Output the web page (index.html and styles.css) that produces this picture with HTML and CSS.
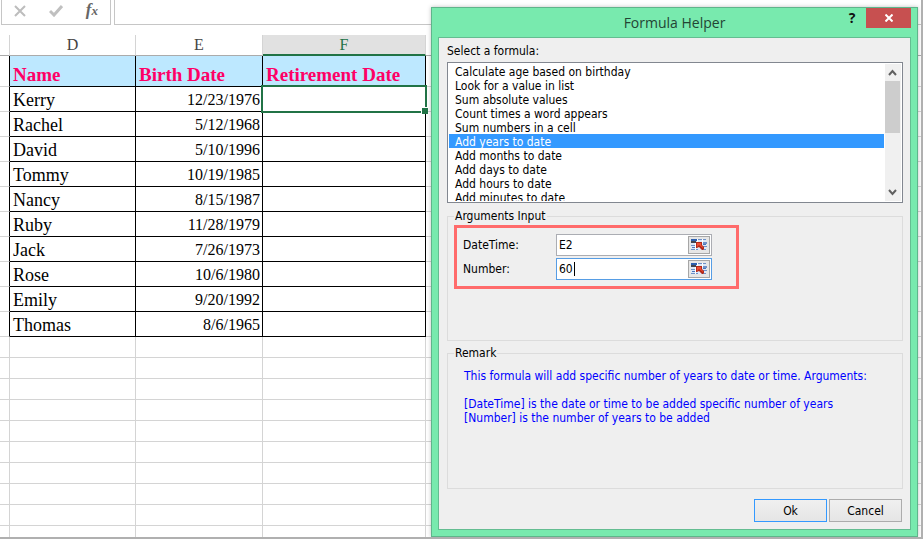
FILE: index.html
```html
<!DOCTYPE html>
<html lang="en">
<head>
<meta charset="utf-8">
<title>Formula Helper</title>
<link rel="stylesheet" href="styles.css">
</head>
<body>
<svg class="defs" aria-hidden="true">
  <symbol id="range-icon" viewBox="0 0 16 12">
    <path fill="#dce8f8" d="M0 1h15v10H0z"/>
    <path fill="#2c5fb0" d="M0 0h6v2H0z"/>
    <path fill="#3f4652" d="M0 2h5v2H0z"/>
    <path fill="#6f92c8" d="M7 0h4v1H7zM12 0h3v1h-3zM8 3h3v1H8zM12 3h4v2h-4zM0 6h4v1H0zM9 6h2v1H9zM12 7h4v1h-4zM0 10h4v1H0zM5 10h2v1H5zM12 10h3v1h-3z"/>
    <path fill="#4a76bd" d="M1 8h3v1H1zM12 5h3v1h-3z"/>
    <path fill="#fff" d="M4 4h1v7H4zM11 0h1v4h-1zM6 0h1v3H6z"/>
    <path fill="#b32a1a" d="M5 3h6v3l2 2v2l-1 1h-1L8 8 6 9H5z"/>
    <path fill="#ee4d33" d="M6 4h4v2l2 2v1L8 6 6 8z"/>
  </symbol>
</svg>
<main class="app">
  <div class="formula-bar">
    <div class="tools">
      <button aria-label="Cancel entry"><svg width="12" height="12" viewBox="0 0 12 12"><path d="M1 1l10 10M11 1L1 11" fill="none" stroke="#bdbdbd" stroke-width="2"/></svg></button>
      <button aria-label="Enter"><svg width="14" height="12" viewBox="0 0 14 12"><path d="M1 6l4 4 8-9" fill="none" stroke="#c0c0c0" stroke-width="3"/></svg></button>
      <button class="fx" aria-label="Insert function">f<sub>x</sub></button>
    </div>
    <input class="formula" aria-label="Formula">
  </div>
  <table class="sheet">
    <colgroup><col class="c"><col class="d"><col class="e"><col class="f"><col></colgroup>
    <thead><tr><th></th><th>D</th><th>E</th><th class="active">F</th><th></th></tr></thead>
    <tbody class="data">
      <tr class="titles"><td></td><th>Name</th><th>Birth Date</th><th>Retirement Date</th><td></td></tr>
      <tr><td></td><td>Kerry</td><td>12/23/1976</td><td class="selected"></td><td></td></tr>
      <tr><td></td><td>Rachel</td><td>5/12/1968</td><td></td><td></td></tr>
      <tr><td></td><td>David</td><td>5/10/1996</td><td></td><td></td></tr>
      <tr><td></td><td>Tommy</td><td>10/19/1985</td><td></td><td></td></tr>
      <tr><td></td><td>Nancy</td><td>8/15/1987</td><td></td><td></td></tr>
      <tr><td></td><td>Ruby</td><td>11/28/1979</td><td></td><td></td></tr>
      <tr><td></td><td>Jack</td><td>7/26/1973</td><td></td><td></td></tr>
      <tr><td></td><td>Rose</td><td>10/6/1980</td><td></td><td></td></tr>
      <tr><td></td><td>Emily</td><td>9/20/1992</td><td></td><td></td></tr>
      <tr><td></td><td>Thomas</td><td>8/6/1965</td><td></td><td></td></tr>
    </tbody>
    <tbody class="blank">
      <tr><td></td><td></td><td></td><td></td><td></td></tr>
      <tr><td></td><td></td><td></td><td></td><td></td></tr>
      <tr><td></td><td></td><td></td><td></td><td></td></tr>
      <tr><td></td><td></td><td></td><td></td><td></td></tr>
      <tr><td></td><td></td><td></td><td></td><td></td></tr>
      <tr><td></td><td></td><td></td><td></td><td></td></tr>
      <tr><td></td><td></td><td></td><td></td><td></td></tr>
      <tr><td></td><td></td><td></td><td></td><td></td></tr>
      <tr><td></td><td></td><td></td><td></td><td></td></tr>
      <tr><td></td><td></td><td></td><td></td><td></td></tr>
    </tbody>
  </table>
  <section class="dialog" role="dialog" aria-labelledby="dialog-title">
    <header class="titlebar">
      <h1 id="dialog-title">Formula Helper</h1>
      <div class="window-buttons">
        <button class="help" aria-label="Help">?</button>
        <button class="close" aria-label="Close"><svg width="8" height="8" viewBox="0 0 8 8"><path d="M0.5 0.5l7 7M7.5 0.5l-7 7" fill="none" stroke="#fff" stroke-width="2"/></svg></button>
      </div>
    </header>
    <form class="content">
      <label class="caption" for="formulas">Select a formula:</label>
      <div class="list">
        <select id="formulas" size="10">
          <option>Calculate age based on birthday</option>
          <option>Look for a value in list</option>
          <option>Sum absolute values</option>
          <option>Count times a word appears</option>
          <option>Sum numbers in a cell</option>
          <option selected>Add years to date</option>
          <option>Add months to date</option>
          <option>Add days to date</option>
          <option>Add hours to date</option>
          <option>Add minutes to date</option>
        </select>
        <div class="scrollbar">
          <svg width="15" height="17" viewBox="0 0 15 17"><path d="M4 11l3.500-4 3.500 4" fill="none" stroke="#606060" stroke-width="2"/></svg>
          <div class="thumb"></div>
          <svg width="15" height="17" viewBox="0 0 15 17"><path d="M4 6l3.500 4 3.500-4" fill="none" stroke="#606060" stroke-width="2"/></svg>
        </div>
      </div>
      <fieldset class="arguments">
        <legend>Arguments Input</legend>
        <div class="highlight">
          <label for="datetime">DateTime:</label>
          <div class="field"><input id="datetime" value="E2"><button type="button" aria-label="Select date cell"><svg width="16" height="12"><use href="#range-icon"/></svg></button></div>
          <label for="number">Number:</label>
          <div class="field current"><input id="number" value="60"><span class="caret"></span><button type="button" aria-label="Select number cell"><svg width="16" height="12"><use href="#range-icon"/></svg></button></div>
        </div>
      </fieldset>
      <fieldset class="remark">
        <legend>Remark</legend>
        <p>This formula will add specific number of years to date or time. Arguments:</p>
        <p>[DateTime] is the date or time to be added specific number of years<br>[Number] is the number of years to be added</p>
      </fieldset>
      <div class="actions">
        <button type="button" class="primary">Ok</button>
        <button type="button">Cancel</button>
      </div>
    </form>
  </section>
</main>
</body>
</html>
```
FILE: styles.css
```css
* { box-sizing: border-box; }
body {
  margin: 0;
  background: #fff;
  color: #000;
  font: 12px/14px "DejaVu Sans Condensed", "Noto Sans", sans-serif;
}
button, input, select { font: inherit; color: inherit; margin: 0; }
.defs { position: absolute; width: 0; height: 0; }
.app {
  position: relative;
  height: 100vh;
  overflow: hidden;
  border: solid #b0b0b0;
  border-width: 0 2px 2px 0;
}

.formula-bar { display: flex; gap: 3px; height: 25px; margin-bottom: 10px; padding-left: 1px; }
.tools {
  display: flex;
  justify-content: space-between;
  align-items: center;
  width: 110px;
  padding: 0 12px 2px;
  border: solid #c6c6c6;
  border-width: 0 1px 1px;
}
.tools button { display: flex; padding: 0; border: 0; background: none; }
.tools .fx { font: italic bold 17px/22px "Liberation Serif", serif; color: #666; }
.fx sub { font-size: 13px; line-height: 24px; vertical-align: baseline; }
.formula { flex: 1; min-width: 0; border: solid #c6c6c6; border-width: 0 0 1px 1px; background: #fff; outline: 0; }

.sheet {
  width: 100%;
  table-layout: fixed;
  border-collapse: separate;
  border-spacing: 0;
  font-family: "Liberation Serif", serif;
}
.c { width: 10px; }
.d { width: 126px; }
.e { width: 127px; }
.f { width: 163px; }
.sheet td, .sheet th { padding: 0; border: solid #d4d4d4; border-width: 0 1px 1px 0; white-space: nowrap; }
.sheet thead th {
  height: 21px;
  border-color: #d4d4d4 #d4d4d4 #ababab;
  font-size: 16px;
  line-height: 20px;
  font-weight: normal;
  color: #444;
}
.sheet thead .active { background: #e1e1e1; color: #217346; border-bottom: 2px solid #217346; line-height: 19px; }
.sheet tr > :last-child { border-right: 0; }
.data td, .data th { height: 25px; line-height: 22px; text-align: left; }
.data .titles > * { height: 31px; }
.data .titles th {
  padding: 7px 3px 0;
  background: #bde8ff;
  color: #ff0066;
  font-size: 19px;
  line-height: 23px;
}
.sheet .data tr > :nth-child(n+2):nth-child(-n+4) { border-color: #000; }
.sheet .data tr > :first-child { border-right-color: #000; }
.sheet .data td:nth-child(2) { padding: 2px 0 0 3px; font-size: 18px; }
.sheet .data td:nth-child(3) { padding: 2px 2px 0 0; font-size: 16px; text-align: right; }
.data .selected { position: relative; }
.selected::before { content: ""; position: absolute; inset: -2px; border: 2px solid #217346; }
.selected::after {
  content: "";
  position: absolute;
  right: -3px;
  bottom: -3px;
  width: 6px;
  height: 6px;
  border: solid #fff;
  border-width: 1px 0 0 1px;
  background: #217346;
}
.blank td { height: 21px; }

.dialog {
  position: absolute;
  top: 7px;
  left: 431px;
  right: 3px;
  padding: 0 6px 6px;
  border: 1px solid #5fb58b;
  background: #78eaae;
  box-shadow: 0 0 4px rgba(0, 0, 0, .25);
}
.titlebar { position: relative; height: 29px; }
.titlebar h1 {
  margin: 0;
  font: 14px/29px "Open Sans", sans-serif;
  text-align: center;
  color: #234534;
}
.window-buttons { position: absolute; top: 0; right: 0; display: flex; gap: 6px; }
.window-buttons button { display: flex; align-items: center; justify-content: center; height: 20px; padding: 0; border: 0; }
.window-buttons .help { width: 16px; background: none; font: bold 14px/20px "Open Sans", sans-serif; color: #111; }
.window-buttons .close { width: 45px; background: #c75050; }
.content { padding: 6px 7px 7px 8px; border: 1px solid #64bd91; background: #efefef; }
.caption { display: block; margin-bottom: 4px; }
.list { display: flex; height: 141px; padding: 1px; border: 1px solid #828790; background: #fff; }
.list select {
  flex: 1;
  min-width: 0;
  height: 137px;
  margin-right: 1px;
  padding: 0;
  border: 0;
  outline: 0;
  background: #fff;
  overflow: hidden;
  scrollbar-width: none;
}
.list option { min-height: 14px; height: 14px; padding: 1px 6px 0; line-height: 14px; }
.list option:checked { background: #3399ff linear-gradient(#3399ff, #3399ff); color: #fff; }
.scrollbar { display: flex; flex-direction: column; width: 16px; background: #f0f0f0; }
.scrollbar svg { flex: none; }
.scrollbar .thumb { height: 52px; width: 15px; margin-bottom: auto; background: #cdcdcd; }

fieldset { min-width: 0; margin: 6px 0 0; padding: 0 6px; border: 1px solid #dcdcdc; }
legend { padding: 0 1px; }
.arguments { height: 132px; }
.highlight {
  display: grid;
  grid-template-columns: 93px 156px;
  gap: 2px 0;
  align-items: center;
  width: 285px;
  margin-top: 2px;
  padding: 6px;
  border: 3px solid #ff6b6b;
}
.field { display: flex; align-items: center; height: 22px; padding: 1px; border: 1px solid #abadb3; background: #fff; }
.field.current { border-color: #569de5; }
.field input { flex: 0 1 130px; min-width: 0; padding: 0 1px; border: 0; outline: 0; background: none; }
.field.current input { flex-basis: 16px; }
.caret { width: 1px; height: 14px; background: #000; }
.field button {
  display: flex;
  align-items: center;
  justify-content: center;
  width: 22px;
  height: 18px;
  margin-left: auto;
  padding: 0;
  border: 1px solid #a6a6a6;
  background: #e6e6e6;
}
.remark { height: 143px; margin-top: 5px; color: #0000ff; }
.remark legend { color: #000; }
.remark p { margin: 9px 10px 14px; }
.remark p + p { margin: 0 10px; }
.actions { display: flex; justify-content: flex-end; gap: 2px; margin: 10px 1px 0 0; }
.actions button {
  width: 73px;
  height: 23px;
  padding: 0;
  border: 1px solid #acacac;
  background: linear-gradient(#f0f0f0, #e5e5e5);
}
.actions .primary { border-color: #3399ff; }
```
